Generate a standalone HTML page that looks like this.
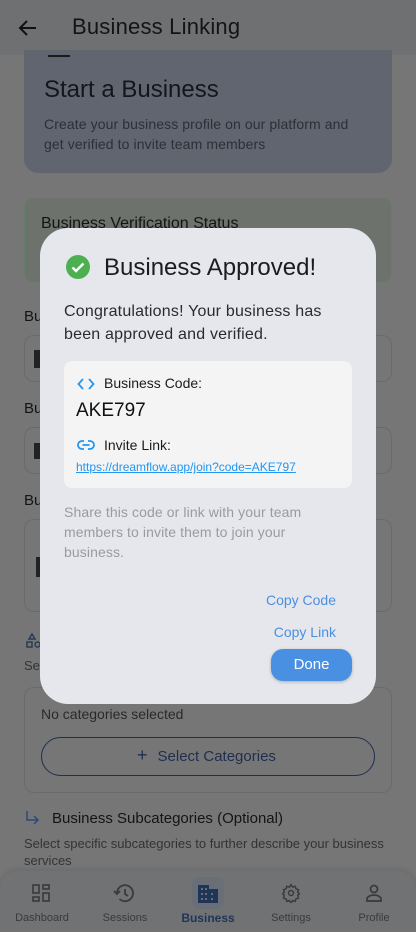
<!DOCTYPE html>
<html><head><meta charset="utf-8"><style>
*{margin:0;padding:0;box-sizing:border-box}
body{width:416px;height:932px;overflow:hidden;font-family:"Liberation Sans",sans-serif;background:#767676;position:relative}
.a{position:absolute}
.t{white-space:nowrap}
</style></head><body>
<div class="a" style="left:0;top:0;width:416px;height:55px;background:#6f7072"></div>
<svg class="a" style="left:16px;top:16px" width="24" height="24" viewBox="0 0 24 24"><path d="M20 12H5M11 5l-7 7 7 7" fill="none" stroke="#111" stroke-width="2"/></svg>
<div class="a t" style="left:72px;top:14px;font-size:22px;color:#141414;letter-spacing:0.2px">Business Linking</div>
<div class="a" style="left:24px;top:50px;width:368px;height:123px;background:#61656f;border-radius:0 0 14px 14px"></div>
<div class="a" style="left:48px;top:55px;width:22px;height:2px;background:#1a1a1a"></div>
<div class="a t" style="left:44px;top:76px;font-size:24px;color:#14161c">Start a Business</div>
<div class="a" style="left:44px;top:114px;font-size:14px;line-height:20px;color:#2c2f36;width:318px;letter-spacing:0.1px">Create your business profile on our platform and get verified to invite team members</div>
<div class="a" style="left:24px;top:197px;width:368px;height:86px;border:1px solid #64806a;border-radius:10px;background:#6d726d"></div>
<div class="a t" style="left:41px;top:215px;font-size:16px;color:#141414">Business Verification Status</div>
<div class="a t" style="left:24px;top:308px;font-size:15px;color:#141414">Bu</div>
<div class="a" style="left:24px;top:335px;width:368px;height:47px;border:1px solid #6a6a6a;border-radius:10px"></div>
<div class="a" style="left:34px;top:350px;width:6px;height:18px;background:#222"></div>
<div class="a t" style="left:24px;top:400px;font-size:15px;color:#141414">Bu</div>
<div class="a" style="left:24px;top:427px;width:368px;height:47px;border:1px solid #6a6a6a;border-radius:10px"></div>
<div class="a" style="left:34px;top:443px;width:6px;height:16px;background:#222"></div>
<div class="a t" style="left:24px;top:492px;font-size:15px;color:#141414">Bu</div>
<div class="a" style="left:24px;top:519px;width:368px;height:93px;border:1px solid #6a6a6a;border-radius:10px"></div>
<div class="a" style="left:36px;top:557px;width:6px;height:20px;background:#222"></div>
<svg class="a" style="left:26px;top:633px" width="16" height="16" viewBox="0 0 16 16" fill="none" stroke="#2a3a55" stroke-width="1.5"><path d="M6 1l3 5H3z"/><rect x="1" y="9" width="5" height="5"/><circle cx="11.5" cy="11.5" r="2.5"/></svg>
<div class="a t" style="left:24px;top:658px;font-size:13px;color:#333">Sel</div>
<div class="a" style="left:24px;top:687px;width:368px;height:106px;border:1px solid #6a6a6a;border-radius:10px"></div>
<div class="a t" style="left:41px;top:706px;font-size:14px;color:#2a2a2a">No categories selected</div>
<div class="a" style="left:41px;top:737px;width:334px;height:39px;border:1.5px solid #1f2f4e;border-radius:20px"></div>
<div class="a t" style="left:137px;top:745px;font-size:15px;color:#1f2f4e"><span style="font-size:18px;margin-right:10px">+</span>Select Categories</div>
<svg class="a" style="left:24px;top:809px" width="18" height="18" viewBox="0 0 18 18"><path d="M3 2v9h11M10 7l4 4-4 4" fill="none" stroke="#2a4a7a" stroke-width="1.5"/></svg>
<div class="a t" style="left:52px;top:810px;font-size:15px;color:#141414">Business Subcategories (Optional)</div>
<div class="a" style="left:24px;top:835px;font-size:13px;line-height:17px;color:#333;width:380px">Select specific subcategories to further describe your business services</div>
<div class="a" style="left:0;top:871px;width:416px;height:61px;background:#717274;border-radius:18px 18px 0 0;box-shadow:0 -2px 6px rgba(0,0,0,.1)"></div>
<svg class="a" style="left:31px;top:883px" width="20" height="20" viewBox="0 0 20 20" fill="none" stroke="#3a3a3a" stroke-width="1.6"><rect x="2" y="2" width="6" height="8"/><rect x="12" y="2" width="6" height="4"/><rect x="2" y="14" width="6" height="4"/><rect x="12" y="10" width="6" height="8"/></svg>
<svg class="a" style="left:113px;top:883px" width="22" height="20" viewBox="0 0 22 20" fill="none" stroke="#3a3a3a" stroke-width="1.8"><path d="M4 10a8 8 0 1 1 2.5 6"/><path d="M1 8l3 3 3-3"/><path d="M12 6v5l3 2"/></svg>
<div class="a" style="left:192px;top:877px;width:32px;height:32px;border-radius:8px;background:#6a6e77"></div>
<svg class="a" style="left:197px;top:884px" width="22" height="20" viewBox="0 0 22 20"><path d="M1 1h11v4h9v14H1z" fill="#1f3557"/><g fill="#6a6e77"><rect x="4" y="4" width="2" height="2"/><rect x="8" y="4" width="2" height="2"/><rect x="4" y="9" width="2" height="2"/><rect x="8" y="9" width="2" height="2"/><rect x="4" y="14" width="2" height="2"/><rect x="8" y="14" width="2" height="2"/><rect x="14" y="9" width="2" height="2"/><rect x="14" y="14" width="2" height="2"/></g></svg>
<svg class="a" style="left:281px;top:883px" width="20" height="20" viewBox="0 0 24 24" fill="none" stroke="#3a3a3a" stroke-width="1.8"><circle cx="12" cy="12" r="3"/><path d="M12 2l2 3 3-1 1 3 3 1-1 3 2 2-2 2 1 3-3 1-1 3-3-1-2 3-2-3-3 1-1-3-3-1 1-3-2-2 2-2-1-3 3-1 1-3 3 1z"/></svg>
<svg class="a" style="left:364px;top:883px" width="20" height="20" viewBox="0 0 20 20" fill="none" stroke="#3a3a3a" stroke-width="1.7"><circle cx="10" cy="6" r="3.5"/><path d="M3 18v-2c0-2 3-4 7-4s7 2 7 4v2z"/></svg>
<div class="a t" style="left:0;top:912px;width:84px;text-align:center;font-size:11px;color:#3a3a3a">Dashboard</div>
<div class="a t" style="left:83px;top:912px;width:84px;text-align:center;font-size:11px;color:#3a3a3a">Sessions</div>
<div class="a t" style="left:166px;top:911px;width:84px;text-align:center;font-size:12px;font-weight:bold;color:#1f3557">Business</div>
<div class="a t" style="left:249px;top:912px;width:84px;text-align:center;font-size:11px;color:#3a3a3a">Settings</div>
<div class="a t" style="left:332px;top:912px;width:84px;text-align:center;font-size:11px;color:#3a3a3a">Profile</div>
<div class="a" style="left:40px;top:228px;width:336px;height:476px;background:#e6e7ec;border-radius:28px"></div>
<svg class="a" style="left:66px;top:255px" width="24" height="24" viewBox="0 0 24 24"><circle cx="12" cy="12" r="12" fill="#4caf50"/><path d="M6.5 12.5l3.5 3.5 7.5-7.5" fill="none" stroke="#fff" stroke-width="2.4"/></svg>
<div class="a t" style="left:104px;top:254px;font-size:24px;color:#1b1c20">Business Approved!</div>
<div class="a" style="left:64px;top:300px;width:280px;font-size:16px;line-height:23px;color:#2a2b30;letter-spacing:0.2px">Congratulations! Your business has been approved and verified.</div>
<div class="a" style="left:64px;top:361px;width:288px;height:127px;background:#f4f4f4;border-radius:8px"></div>
<svg class="a" style="left:77px;top:377px" width="18" height="14" viewBox="0 0 18 14" fill="none" stroke="#2196f3" stroke-width="1.8"><path d="M6 2L1.5 7 6 12M12 2l4.5 5L12 12"/></svg>
<div class="a t" style="left:104px;top:375px;font-size:14px;color:#1b1c20">Business Code:</div>
<div class="a t" style="left:76px;top:400px;font-size:19px;color:#111">AKE797</div>
<svg class="a" style="left:77px;top:439px" width="18" height="12" viewBox="0 0 18 12" fill="none" stroke="#2196f3" stroke-width="1.8"><path d="M7 2H5a4 4 0 0 0 0 8h2M11 2h2a4 4 0 0 1 0 8h-2M5.5 6h7"/></svg>
<div class="a t" style="left:104px;top:437px;font-size:14px;color:#1b1c20">Invite Link:</div>
<div class="a t" style="left:76px;top:460px;font-size:12px;color:#2196f3;text-decoration:underline">https://dreamflow.app/join?code=AKE797</div>
<div class="a" style="left:64px;top:502px;width:270px;font-size:14px;line-height:20px;color:#9a9ba0;letter-spacing:0.1px">Share this code or link with your team members to invite them to join your business.</div>
<div class="a t" style="left:200px;top:592px;width:136px;text-align:right;font-size:14px;color:#4a90e2">Copy Code</div>
<div class="a t" style="left:200px;top:624px;width:136px;text-align:right;font-size:14px;color:#4a90e2">Copy Link</div>
<div class="a" style="left:271px;top:649px;width:81px;height:32px;background:#4a90e2;border-radius:12px;box-shadow:0 1px 3px rgba(0,0,0,.25);color:#fff;font-size:15px;text-align:center;line-height:32px">Done</div>
</body></html>
